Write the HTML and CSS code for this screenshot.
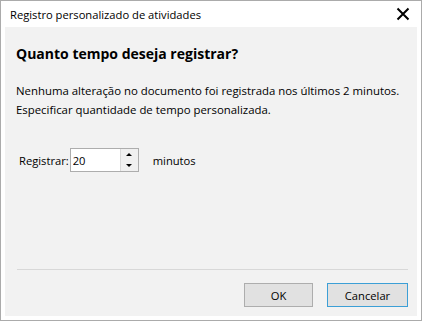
FILE: index.html
```html
<!DOCTYPE html>
<html lang="pt">
<head>
  <meta charset="UTF-8" />
  <title>Registro personalizado de atividades</title>
  <link rel="stylesheet" href="styles.css">
</head>
<body>

<div class="window">
  <div class="titlebar">
    <span class="title">Registro personalizado de atividades</span>
    <svg class="close" width="14" height="14" viewBox="0 0 14 14">
      <path d="M1.5 1.5 L12.5 12.5 M12.5 1.5 L1.5 12.5" stroke="#000" stroke-width="2" fill="none" />
    </svg>
  </div>

  <div class="content">
    <h2>Quanto tempo deseja registrar?</h2>
    <p class="info">
      Nenhuma alteração no documento foi registrada nos últimos 2 minutos.<br>
      Especificar quantidade de tempo personalizada.
    </p>

    <div class="field-row">
      <label for="mins">Registrar:</label>
      <div class="spin">
        <input id="mins" type="text" value="20" />
        <div class="spin-buttons">
          <span class="arrow up"></span>
          <span class="arrow down"></span>
        </div>
      </div>
      <span class="unit">minutos</span>
    </div>

    <div class="spacer"></div>

    <!-- Footer -->
    <div class="footer">
      <button class="btn">OK</button>
      <button class="btn btn-focus">Cancelar</button>
    </div>
  </div>
</div>

</body>
</html>
```

FILE: styles.css
```css
html, body {
  margin: 0;
  height: 100%;
}
body {
  font-family: 'Segoe UI', 'Open Sans', sans-serif;
  font-size: 11.2px;
  color: #000;
  background: #fff;
}
.window {
  box-sizing: border-box;
  width: 422px;
  height: 321px;
  border: 1px solid #ababab;
  background: #fff;
  display: flex;
  flex-direction: column;
  padding: 0 4px 4px;
}
.titlebar {
  height: 26px;
  display: flex;
  align-items: center;
  justify-content: space-between;
  padding: 0 4px 0 5px;
}
.close {
  display: block;
  margin-right: 3px;
}
.content {
  flex: 1;
  background: #f2f2f2;
  display: flex;
  flex-direction: column;
  padding: 0 9px 0 11px;
  white-space: nowrap;
}
.content h2 {
  margin: 17px 0 0;
  font-size: 14px;
  font-weight: 700;
  line-height: 20px;
}
.info {
  margin: 17px 0 0;
  font-size: 11.4px;
  line-height: 19px;
}
.field-row {
  display: flex;
  align-items: center;
  margin: 29px 0 0 3px;
}
.field-row label {
  margin-right: 1px;
}
.spin {
  display: flex;
  width: 69px;
  height: 24px;
  box-sizing: border-box;
  border: 1px solid #adadad;
  background: #fff;
}
.spin input {
  flex: 1;
  min-width: 0;
  border: none;
  outline: none;
  padding: 0 0 0 2px;
  font: inherit;
  background: transparent;
}
.spin-buttons {
  width: 17px;
  border-left: 1px solid #d9d9d9;
  background: #f0f0f0;
  display: flex;
  flex-direction: column;
  align-items: center;
  justify-content: space-around;
}
.arrow {
  width: 0;
  height: 0;
  border-left: 3px solid transparent;
  border-right: 3px solid transparent;
}
.arrow.up {
  border-bottom: 3px solid #000;
}
.arrow.down {
  border-top: 3px solid #000;
}
.unit {
  margin-left: 14px;
}
.spacer {
  flex: 1;
}
.footer {
  border-top: 1px solid #d8d8d8;
  margin: 0 0 9px 1px;
  padding-top: 13px;
  display: flex;
  justify-content: flex-end;
  gap: 14px;
}
.btn {
  width: 69px;
  height: 24px;
  font: inherit;
  background: #e1e1e1;
  border: 1px solid #adadad;
  padding: 0;
  color: #000;
}
.btn-focus {
  width: 81px;
  border-color: #3c9fd6;
}
```
